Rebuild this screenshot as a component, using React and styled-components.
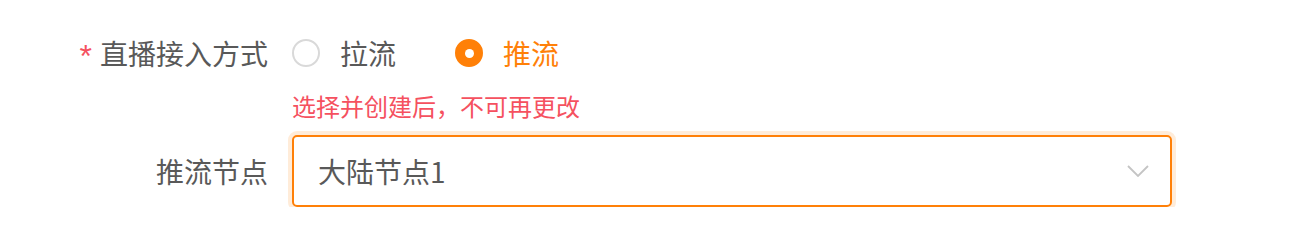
import React from "react";
import styled, { createGlobalStyle } from "styled-components";

const Global = createGlobalStyle`
  html, body { margin: 0; padding: 0; background: #fff; }
  body { font-family: "Noto Sans CJK SC", "Noto Sans", sans-serif; }
`;

const ORANGE = "#ff8008";
const RED = "#f5515f";
const TEXT = "#595959";

const Form = styled.div`
  padding-top: 21px;
  width: 1298px;
`;

const Row = styled.div`
  display: flex;
  align-items: center;
  height: ${(p) => p.$h}px;
`;

const Label = styled.div`
  width: 268px;
  padding-right: 24px;
  display: flex;
  justify-content: flex-end;
  align-items: center;
  font-size: 28px;
  line-height: 40px;
  color: ${TEXT};
  white-space: nowrap;
`;

const Star = styled.span`
  color: ${RED};
  font-family: "Liberation Sans", sans-serif;
  font-size: 32px;
  line-height: 28px;
  margin-right: 8px;
  position: relative;
  top: 3px;
`;

const RadioGroup = styled.div`
  display: flex;
  align-items: center;
`;

const RadioItem = styled.label`
  display: inline-flex;
  align-items: center;
  gap: 20px;
  margin-right: ${(p) => (p.$last ? 0 : 59)}px;
  font-size: 28px;
  line-height: 40px;
  color: ${(p) => (p.$checked ? ORANGE : TEXT)};
`;

const Circle = styled.span`
  box-sizing: border-box;
  width: 28px;
  height: 28px;
  border-radius: 50%;
  border: 2px solid ${(p) => (p.$checked ? ORANGE : "#d9d9d9")};
  background: ${(p) => (p.$checked ? ORANGE : "#fff")};
  display: flex;
  align-items: center;
  justify-content: center;
  &::after {
    content: "";
    display: ${(p) => (p.$checked ? "block" : "none")};
    width: 9px;
    height: 9px;
    border-radius: 50%;
    background: #fff;
  }
`;

const Help = styled.div`
  margin-top: 5px;
  padding-left: 292px;
  font-size: 24px;
  line-height: 32px;
  color: ${RED};
`;

const SelectBox = styled.div`
  box-sizing: border-box;
  width: 880px;
  height: 72px;
  border: 2px solid ${ORANGE};
  border-radius: 5px;
  box-shadow: 0 0 0 4px #ffecd9;
  display: flex;
  align-items: center;
  justify-content: space-between;
  padding: 0 21px 0 24px;
  font-size: 28px;
  color: ${TEXT};
`;

const Chevron = () => (
  <svg width="22" height="12" viewBox="0 0 22 12" fill="none">
    <polyline points="1,1 11,11 21,1" stroke="#c4c4c4" strokeWidth="1.8" />
  </svg>
);

const Radio = ({ checked, last, children }) => (
  <RadioItem $checked={checked} $last={last}>
    <Circle $checked={checked} />
    {children}
  </RadioItem>
);

export default function App() {
  return (
    <>
      <Global />
      <Form>
        <Row $h={64}>
          <Label>
            <Star>*</Star>直播接入方式
          </Label>
          <RadioGroup>
            <Radio>拉流</Radio>
            <Radio checked last>
              推流
            </Radio>
          </RadioGroup>
        </Row>
        <Help>选择并创建后，不可再更改</Help>
        <Row $h={72} style={{ marginTop: 13 }}>
          <Label>推流节点</Label>
          <SelectBox>
            <span>大陆节点1</span>
            <Chevron />
          </SelectBox>
        </Row>
      </Form>
    </>
  );
}
